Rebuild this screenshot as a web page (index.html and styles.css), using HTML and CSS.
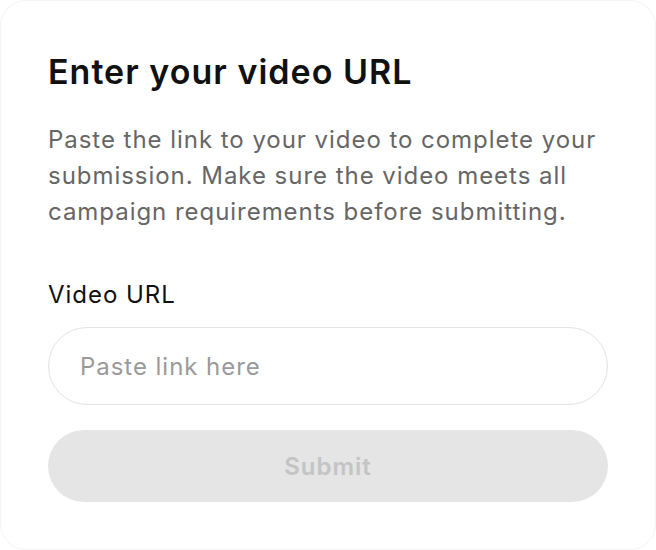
FILE: index.html
```html
<!DOCTYPE html>
<html lang="en">
<head>
    <meta charset="UTF-8">
    <meta name="viewport" content="width=device-width, initial-scale=1.0">
    <title>Submit video</title>
    <link rel="stylesheet" href="styles.css">
</head>
<body>
    <div class="card">
        <h1 class="title">Enter your video URL</h1>
        <p class="desc">Paste the link to your video to complete your submission. Make sure the video meets all campaign requirements before submitting.</p>
        <label for="videoUrl" class="label">Video URL</label>
        <input type="text" id="videoUrl" class="url-input" placeholder="Paste link here">
        <button class="submit" disabled>Submit</button>
    </div>
</body>
</html>
```

FILE: styles.css
```css
body {
    margin: 0;
    background-color: #ffffff;
    font-family: Inter, "Noto Sans", sans-serif;
}
.card {
    box-sizing: border-box;
    width: 656px;
    height: 550px;
    padding: 51px 47px 47px;
    background-color: #fff;
    border: 1px solid #f4f4f4;
    border-radius: 26px;
    display: flex;
    flex-direction: column;
}
.title {
    margin: 0;
    font-size: 34px;
    font-weight: 600;
    line-height: 40px;
    color: #111;
    letter-spacing: 0.03em;
}
.desc {
    margin: 30px 0 0;
    font-size: 24px;
    line-height: 36px;
    color: #666;
    letter-spacing: 0.04em;
}
.label {
    margin-top: 50px;
    font-size: 24px;
    line-height: 30px;
    color: #111;
    letter-spacing: 0.04em;
}
.url-input {
    box-sizing: border-box;
    margin-top: 17px;
    height: 78px;
    padding: 0 31px;
    border: 1.5px solid #e3e3e3;
    border-radius: 39px;
    font-family: inherit;
    font-size: 24px;
    letter-spacing: 0.04em;
    color: #111;
    outline: none;
}
.url-input::placeholder {
    color: #9a9a9a;
}
.submit {
    margin-top: 25px;
    height: 72px;
    border: none;
    border-radius: 36px;
    background-color: #e5e5e5;
    color: #c4c4c4;
    font-family: inherit;
    font-size: 24px;
    font-weight: 600;
    letter-spacing: 0.04em;
}
```
